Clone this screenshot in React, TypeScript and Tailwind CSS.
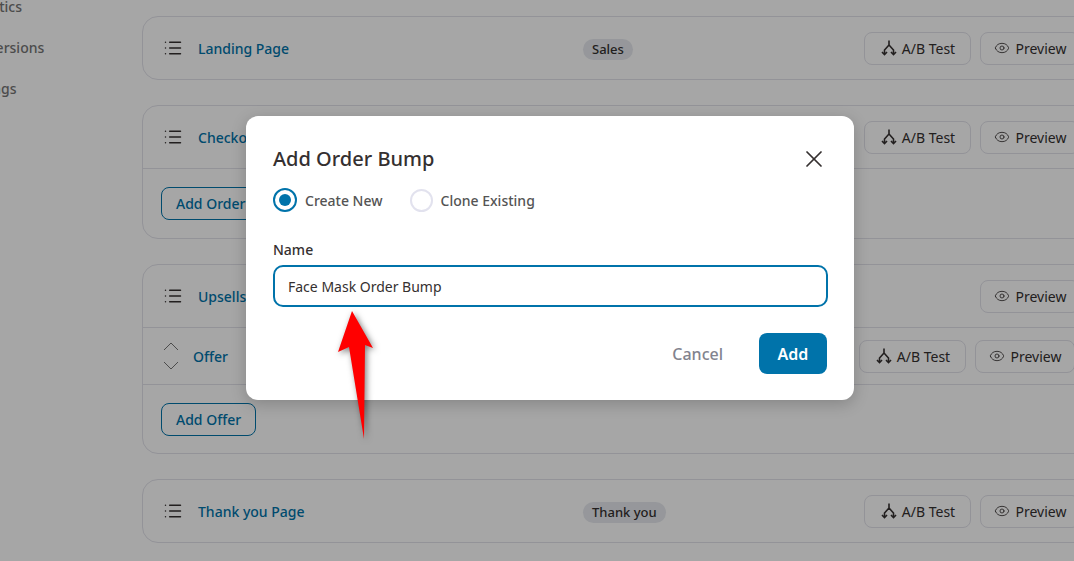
import { Eye, List, X } from 'lucide-react'

function SplitIcon() {
  return (
    <svg width="18" height="18" viewBox="0 0 18 18" fill="none" stroke="currentColor" strokeWidth="1.6" className="shrink-0">
      <path d="M9 1.5v4.5M9 6l-4.5 5v4M9 6l4.5 5v4" />
      <path d="M2 13l2.5 2.6L7 13M11 13l2.5 2.6L16 13" />
    </svg>
  )
}

function Actions({ ab = true }: { ab?: boolean }) {
  return (
    <div className="flex items-center gap-[9px] shrink-0">
      {ab ? (
        <button className="flex items-center justify-center gap-[4px] w-[107px] h-[33px] border border-[#e2e2ea] rounded-[8px] text-[14px] text-[#353030]">
          <SplitIcon />
          A/B Test
        </button>
      ) : (
        <div className="w-[107px]" />
      )}
      <button className="flex items-center justify-center gap-[6px] w-[100px] h-[33px] border border-[#e2e2ea] rounded-[8px] text-[14px] text-[#353030]">
        <Eye size={16} strokeWidth={1.25} />
        Preview
      </button>
    </div>
  )
}

function StepRow({ title, badge, ab = true }: { title: string; badge?: string; ab?: boolean }) {
  return (
    <div className="flex items-center h-[62px] pl-[20px]">
      <List size={20} strokeWidth={1.75} className="text-[#353030] shrink-0" />
      <div className="w-[400px] pl-[15px] shrink-0 text-[14px] font-medium text-[#0073aa]">{title}</div>
      <div className="w-[281px] shrink-0">
        {badge && (
          <span className="inline-block rounded-full bg-[#e6e9ee] px-[9px] py-[1px] text-[13px] font-medium text-[#353030]">{badge}</span>
        )}
      </div>
      <Actions ab={ab} />
    </div>
  )
}

function AddButton({ label }: { label: string }) {
  return (
    <button className="h-[33px] px-[14px] border border-[#0073aa] rounded-[8px] text-[14px] font-medium text-[#0073aa]">
      {label}
    </button>
  )
}

export default function App() {
  return (
    <div className="relative h-[561px] w-full overflow-hidden bg-white font-['Noto_Sans',sans-serif]">
      <div className="flex">
        {/* Sidebar, cut off by the window */}
        <div className="w-[142px] shrink-0 -ml-[38px] pl-0 flex flex-col gap-[21px] -mt-[4px] text-[14px] font-medium text-[#757575]">
          <div className="h-[20px] whitespace-nowrap">Analytics</div>
          <div className="h-[20px] whitespace-nowrap">Conversions</div>
          <div className="h-[20px] whitespace-nowrap">Settings</div>
        </div>

        <div className="ml-[38px] pt-[16px] flex flex-col gap-[25px] w-[1000px] shrink-0">
          <div className="border border-[#e2e2ea] rounded-[16px]">
            <StepRow title="Landing Page" badge="Sales" />
          </div>

          <div className="border border-[#e2e2ea] rounded-[16px]">
            <StepRow title="Checkout" />
            <div className="border-t border-[#e2e2ea] h-[70px] pl-[18px] pt-[18px]">
              <AddButton label="Add Order Bump" />
            </div>
          </div>

          <div className="border border-[#e2e2ea] rounded-[16px]">
            <StepRow title="Upsells" ab={false} />
            <div className="flex items-center h-[57px] border-t border-[#e2e2ea] pl-[20px]">
              <svg width="16" height="30" viewBox="0 0 16 30" fill="none" stroke="#757575" strokeWidth="1" className="shrink-0">
                <path d="M1 9l7-7 7 7M1 21l7 7 7-7" />
              </svg>
              <div className="w-[403px] pl-[14px] shrink-0 text-[14px] font-medium text-[#0073aa]">Offer</div>
              <div className="w-[277px] shrink-0" />
              <Actions />
            </div>
            <div className="border-t border-[#e2e2ea] h-[69px] pl-[18px] pt-[18px]">
              <AddButton label="Add Offer" />
            </div>
          </div>

          <div className="border border-[#e2e2ea] rounded-[16px]">
            <StepRow title="Thank you Page" badge="Thank you" />
          </div>
        </div>
      </div>

      {/* Dim layer */}
      <div className="absolute inset-0 bg-black/35" />

      {/* Modal */}
      <div className="absolute left-[246px] top-[116px] w-[608px] h-[284px] rounded-[12px] bg-white px-[27px] shadow-[0_4px_16px_rgba(0,0,0,0.2)]">
        <div className="flex items-center justify-between pt-[28px] h-[57px]">
          <div className="text-[20px] leading-[28px] font-medium text-[#353030]">Add Order Bump</div>
          <X size={28} strokeWidth={1.5} className="text-[#353030] mr-[-1px]" />
        </div>

        <div className="flex items-center h-[24px] mt-[15px] text-[14px] font-medium text-[#545454]">
          <span className="flex items-center justify-center w-[24px] h-[24px] rounded-full border-2 border-[#0073aa]">
            <span className="w-[12px] h-[12px] rounded-full bg-[#0073aa]" />
          </span>
          <span className="ml-[8px]">Create New</span>
          <span className="ml-[27px] w-[23px] h-[23px] rounded-full border-2 border-[#e2e2ee]" />
          <span className="ml-[8px]">Clone Existing</span>
        </div>

        <div className="mt-[27px] h-[22px] text-[14px] leading-[22px] font-medium text-[#353030]">Name</div>
        <div className="mt-[4px] flex items-center h-[42px] w-[555px] border-2 border-[#0073aa] rounded-[10px] pl-[13px] text-[14px] text-[#353030]">
          Face Mask Order Bump
        </div>

        <div className="flex items-center justify-end mt-[26px]">
          <button className="text-[16px] font-medium text-[#82838e]">Cancel</button>
          <button className="ml-[36px] w-[68px] h-[41px] rounded-[8px] bg-[#0073aa] text-[16px] font-semibold text-white">Add</button>
        </div>
      </div>

      {/* Annotation arrow */}
      <svg className="absolute left-[330px] top-[305px] drop-shadow-[2px_2px_3px_rgba(0,0,0,0.5)]" width="50" height="140" viewBox="330 305 50 140">
        <path d="M352 311L373 348L365 345L364 439L349 347L338 352Z" fill="#ff0000" />
      </svg>
    </div>
  )
}
